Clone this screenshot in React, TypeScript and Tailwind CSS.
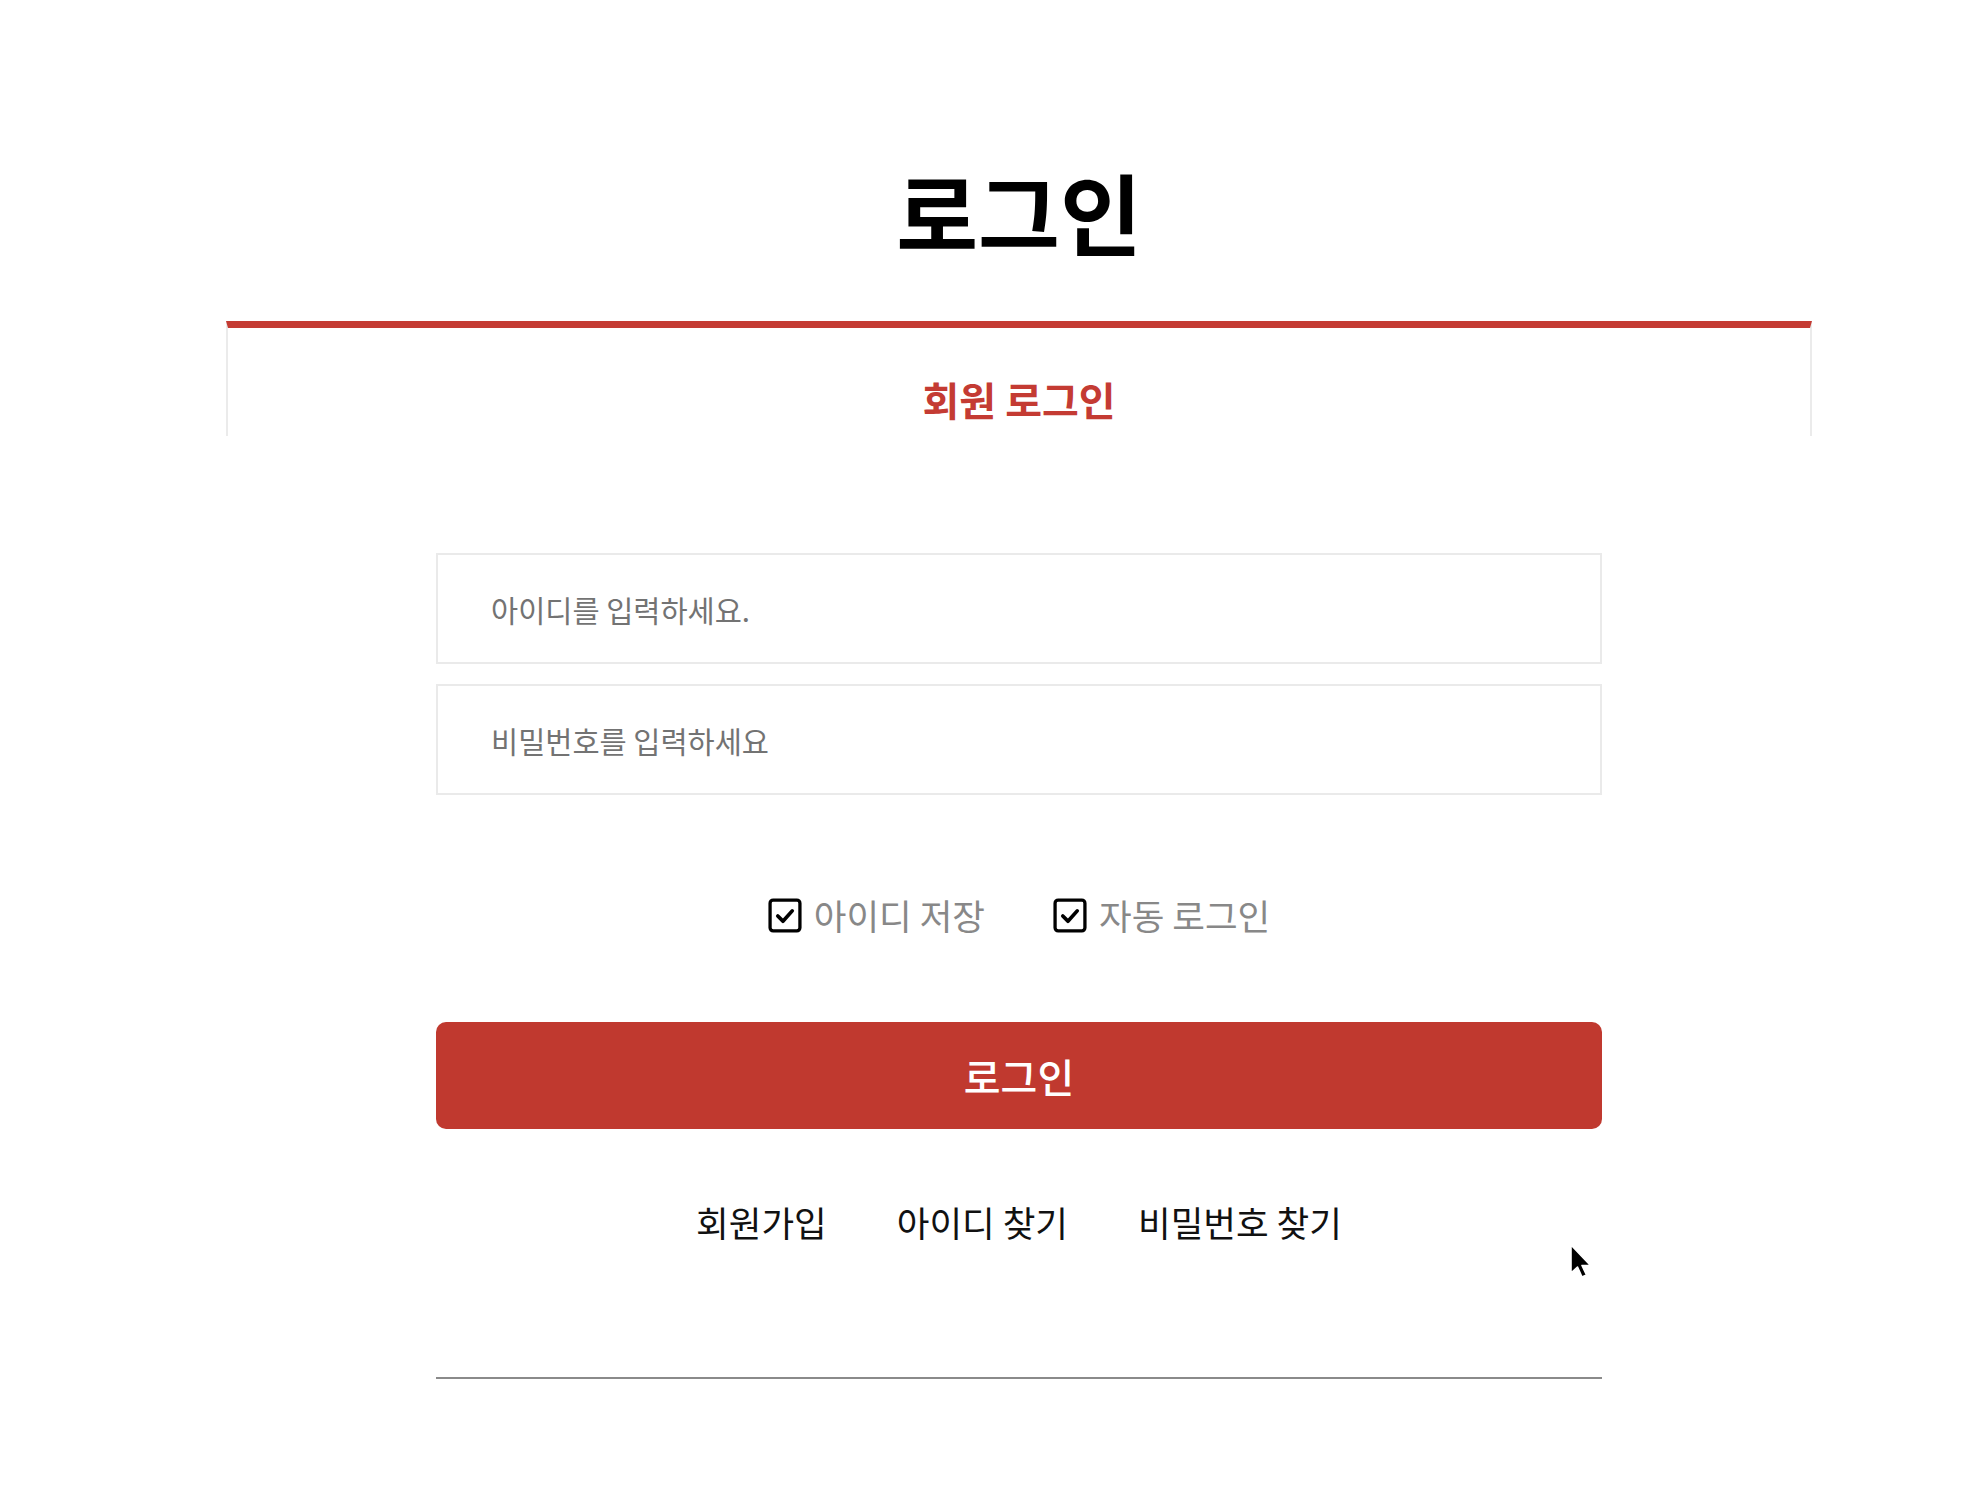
import React, { useState } from 'react';

const CheckIcon: React.FC = () => (
  <svg width="34" height="35" viewBox="0 0 33 34" fill="none" xmlns="http://www.w3.org/2000/svg">
    <rect x="2" y="2" width="29" height="30" rx="3" stroke="#000" strokeWidth="3.2" />
    <path d="M9.5 17.5l5 5 9-10" stroke="#000" strokeWidth="3.6" strokeLinecap="round" strokeLinejoin="round" />
  </svg>
);

const Cursor: React.FC = () => (
  <svg width="26" height="38" viewBox="0 0 26 38" xmlns="http://www.w3.org/2000/svg">
    <path d="M2 1 L2 29 L8.5 23 L13 33 L17.5 31 L13 21.5 L21.5 21.5 Z" fill="#000" stroke="#fff" strokeWidth="1.6" strokeLinejoin="round" />
  </svg>
);

const App: React.FC = () => {
  const [saveId, setSaveId] = useState(true);
  const [autoLogin, setAutoLogin] = useState(true);

  return (
    <div className="relative min-h-[1508px] bg-white font-['Noto_Sans_CJK_KR','Noto_Sans',sans-serif]">
      <div className="ml-[226px] w-[1586px] flex flex-col">
        <h1 className="mt-[166px] text-center text-[89px] leading-[89px] font-bold text-black">
          로그인
        </h1>

        <div className="mt-[66px] h-[115px] border-t-[7px] border-t-[#c43b33] border-x-2 border-x-[#ebebeb] flex flex-col items-center">
          <h2 className="mt-[51px] text-[40px] leading-[40px] font-bold text-[#c43b33]">회원 로그인</h2>
        </div>

        <div className="mx-auto w-[1166px] flex flex-col">
          <div className="mt-[117px] flex flex-col gap-[20px]">
            <input
              type="text"
              placeholder="아이디를 입력하세요."
              className="h-[111px] border-2 border-[#eaeaea] px-[53px] text-[29.5px] text-[#333] placeholder:text-[#737373] outline-none"
            />
            <input
              type="password"
              placeholder="비밀번호를 입력하세요"
              className="h-[111px] border-2 border-[#eaeaea] px-[53px] text-[29.5px] text-[#333] placeholder:text-[#737373] outline-none"
            />
          </div>

          <div className="mt-[101px] flex justify-center items-center gap-[68px]">
            <label className="flex items-center gap-[12px] cursor-pointer" onClick={() => setSaveId(!saveId)}>
              {saveId ? <CheckIcon /> : <span className="w-[34px] h-[35px] border-[3px] border-black rounded-[4px]" />}
              <span className="text-[35.5px] leading-[38px] text-[#888]">아이디 저장</span>
            </label>
            <label className="flex items-center gap-[12px] cursor-pointer" onClick={() => setAutoLogin(!autoLogin)}>
              {autoLogin ? <CheckIcon /> : <span className="w-[34px] h-[35px] border-[3px] border-black rounded-[4px]" />}
              <span className="text-[35.5px] leading-[38px] text-[#888]">자동 로그인</span>
            </label>
          </div>

          <button className="mt-[88px] h-[107px] rounded-[10px] bg-[#c0392f] text-white text-[40px] font-medium">
            로그인
          </button>

          <div className="mt-[75px] flex justify-center gap-[70px] text-[35.5px] leading-[36px] text-[#111]">
            <a href="#">회원가입</a>
            <a href="#">아이디 찾기</a>
            <a href="#">비밀번호 찾기</a>
          </div>

          <div className="mt-[137px] h-[2px] bg-[#8a8a8a]" />
        </div>
      </div>

      <div className="absolute left-[1569px] top-[1244px]">
        <Cursor />
      </div>
    </div>
  );
};

export default App;
